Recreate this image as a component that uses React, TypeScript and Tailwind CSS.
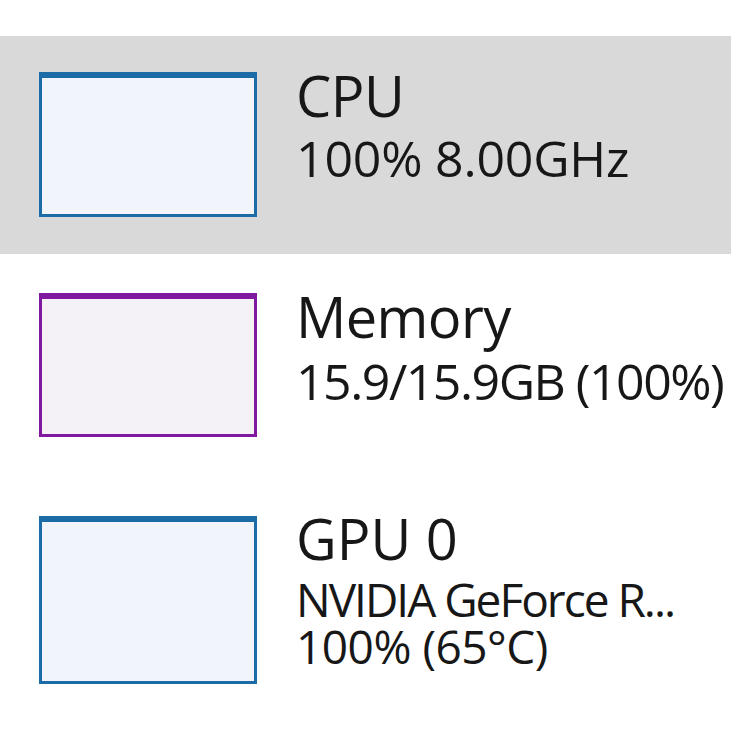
import React from "react";

type Resource = {
  name: string;
  lines: string[];
  border: string;
  fill: string;
  rowClass: string;
  boxClass: string;
  titleClass: string;
  lineClass: string[];
};

const resources: Resource[] = [
  {
    name: "CPU",
    lines: ["100% 8.00GHz"],
    border: "border-[#1a6ba6]",
    fill: "bg-[#f1f4fb]",
    rowClass: "pt-[36px] pb-[37px] bg-[#d9d9d9]",
    boxClass: "h-[145px]",
    titleClass: "-mt-[5px] tracking-[-0.5px]",
    lineClass: ["mt-[10px] text-[50px] leading-[50px] tracking-[-0.2px]"],
  },
  {
    name: "Memory",
    lines: ["15.9/15.9GB (100%)"],
    border: "border-[#7f1aa0]",
    fill: "bg-[#f4f2f6]",
    rowClass: "pt-[39px] pb-[40px]",
    boxClass: "h-[144px]",
    titleClass: "-mt-[5px] tracking-[-0.6px]",
    lineClass: ["mt-[12px] text-[50px] leading-[50px] tracking-[-1.5px]"],
  },
  {
    name: "GPU 0",
    lines: ["NVIDIA GeForce R...", "100% (65°C)"],
    border: "border-[#1a6ba6]",
    fill: "bg-[#f1f4fb]",
    rowClass: "pt-[39px] pb-[40px]",
    boxClass: "h-[168px]",
    titleClass: "-mt-[6px]",
    lineClass: [
      "mt-[10px] text-[46px] leading-[46px] tracking-[-2px]",
      "mt-[1px] text-[46px] leading-[46px] tracking-[-0.5px]",
    ],
  },
];

function ResourceRow({ r }: { r: Resource }) {
  return (
    <div className={`flex items-start pl-[39px] ${r.rowClass}`}>
      {/* mini graph, empty */}
      <div
        className={`w-[218px] shrink-0 border-[3px] border-t-[6px] ${r.border} ${r.fill} ${r.boxClass}`}
      />
      <div className="ml-[39px] flex flex-col text-[#171717]">
        <div className={`text-[56px] leading-[56px] ${r.titleClass}`}>
          {r.name}
        </div>
        {r.lines.map((line, i) => (
          <div key={i} className={`whitespace-nowrap ${r.lineClass[i]}`}>
            {line}
          </div>
        ))}
      </div>
    </div>
  );
}

export default function App() {
  return (
    <div
      className="h-[731px] w-[731px] overflow-hidden bg-white pt-[36px]"
      style={{ fontFamily: '"Open Sans", "Noto Sans", sans-serif' }}
    >
      {resources.map((r) => (
        <ResourceRow key={r.name} r={r} />
      ))}
    </div>
  );
}
